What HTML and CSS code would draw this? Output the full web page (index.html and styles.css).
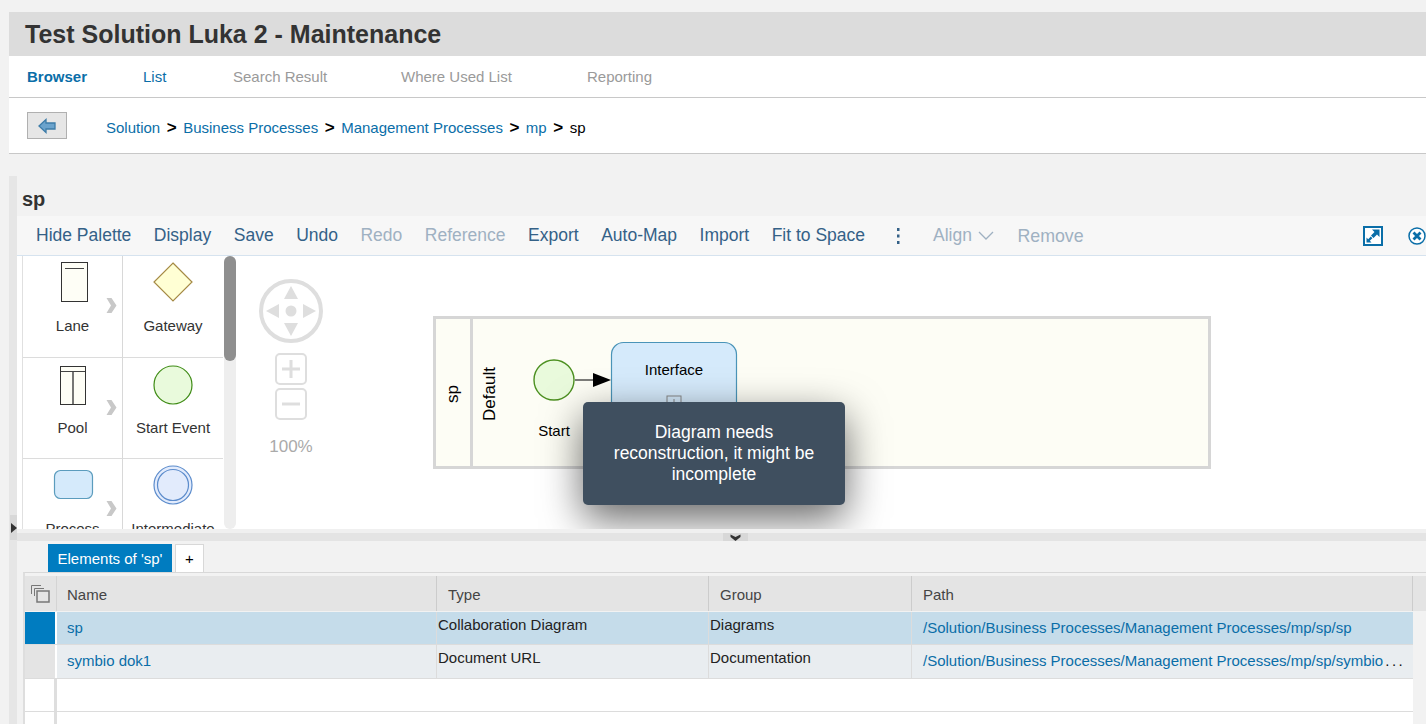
FILE: index.html
```html
<!DOCTYPE html>
<html lang="en">
<head>
<meta charset="UTF-8">
<meta name="viewport" content="width=device-width, initial-scale=1.0">
<title>Test Solution Luka 2 - Maintenance</title>
<link rel="stylesheet" href="styles.css">
</head>
<body>
<div class="page">
    <div class="title-bar"><h1>Test Solution Luka 2 - Maintenance</h1></div>
    <div class="main-tabs">
        <a class="active">Browser</a>
        <a class="enabled">List</a>
        <a>Search Result</a>
        <a>Where Used List</a>
        <a>Reporting</a>
    </div>
    <div class="crumbs">
        <button class="back-btn" type="button">
            <svg width="18" height="16" viewBox="0 0 18 16"><path d="M1 8 8 1.500V5H17V11H8V14.500Z" fill="#6ba3cc" stroke="#3d7ca8" stroke-width="1.300"/></svg>
        </button>
        <div class="crumb-list">
            <a>Solution</a><b>&gt;</b>
            <a>Business Processes</a><b>&gt;</b>
            <a>Management Processes</a><b>&gt;</b>
            <a>mp</a><b>&gt;</b>
            <span>sp</span>
        </div>
    </div>

    <div class="workspace">
        <div class="side-strip"><span class="strip-handle"></span></div>
        <div class="panel">
            <h2>sp</h2>
            <div class="toolbar">
                <span>Hide Palette</span>
                <span>Display</span>
                <span>Save</span>
                <span>Undo</span>
                <span class="off">Redo</span>
                <span class="off">Reference</span>
                <span>Export</span>
                <span>Auto-Map</span>
                <span>Import</span>
                <span>Fit to Space</span>
                <svg class="dots" width="4" height="18" viewBox="0 0 4 18"><path d="M1 1h2.500v3H1zM1 7.500h2.500v3H1zM1 14h2.500v3H1z" fill="#346187"/></svg>
                <span class="off align">Align
                    <svg width="16" height="9" viewBox="0 0 16 9"><path d="M1 1 8 8 15 1" fill="none" stroke="#9fb1c2" stroke-width="1.300"/></svg>
                </span>
                <span class="off remove">Remove</span>
                <div class="toolbar-right">
                    <svg width="20" height="20" viewBox="0 0 20 20"><rect x="1" y="1" width="18" height="18" fill="#fff" stroke="#0a6ea8" stroke-width="2"/><path d="M9 3.500h7.500V11L14 8.500 10.500 12 8 9.500 11.500 6z" fill="#0a6ea8"/><path d="M3.500 16.500V11.500L5.200 13.200 7.800 10.600 9.400 12.200 6.800 14.800 8.500 16.500z" fill="#0a6ea8"/></svg>
                    <svg class="close-icon" width="18" height="18" viewBox="0 0 18 18"><circle cx="9" cy="9" r="8" fill="#fff" stroke="#0a6ea8" stroke-width="1.500"/><path d="M5.500 5.500 12.500 12.500M12.500 5.500 5.500 12.500" stroke="#0a6ea8" stroke-width="2.800"/></svg>
                </div>
            </div>

            <div class="editor">
                <div class="palette">
                    <div class="palette-grid">
                        <div class="cell">
                            <svg width="60" height="50" viewBox="0 0 60 50"><rect x="18.500" y="4.500" width="26" height="39" fill="#fefef6" stroke="#333"/><path d="M22 10.500H41" stroke="#444"/></svg>
                            <span>Lane</span>
                            <svg class="more" width="11" height="17" viewBox="0 0 11 17"><path d="M0.500 1h5l5 7.500-5 7.500h-5l4.500-7.500z" fill="#c8c8c8"/></svg>
                        </div>
                        <div class="cell">
                            <svg width="60" height="50" viewBox="0 0 60 50"><path d="M30 5 49 24 30 43 11 24Z" fill="#ffffd4" stroke="#a58a45" stroke-width="1.200"/></svg>
                            <span>Gateway</span>
                        </div>
                        <div class="cell">
                            <svg width="60" height="50" viewBox="0 0 60 50"><rect x="17.500" y="6.500" width="25" height="38" fill="#fefef6" stroke="#333"/><path d="M18 11.500H42" stroke="#444"/><path d="M30 12V44" stroke="#555" stroke-width="1.600"/></svg>
                            <span>Pool</span>
                            <svg class="more" width="11" height="17" viewBox="0 0 11 17"><path d="M0.500 1h5l5 7.500-5 7.500h-5l4.500-7.500z" fill="#c8c8c8"/></svg>
                        </div>
                        <div class="cell">
                            <svg width="60" height="50" viewBox="0 0 60 50"><circle cx="30" cy="25" r="19" fill="#e9fadc" stroke="#3f8c16" stroke-width="1.200"/></svg>
                            <span>Start Event</span>
                        </div>
                        <div class="cell">
                            <svg width="60" height="50" viewBox="0 0 60 50"><rect x="11.500" y="9.500" width="38" height="28" rx="6" fill="#d5eafb" stroke="#5b9cbd" stroke-width="1.200"/></svg>
                            <span>Process</span>
                            <svg class="more" width="11" height="17" viewBox="0 0 11 17"><path d="M0.500 1h5l5 7.500-5 7.500h-5l4.500-7.500z" fill="#c8c8c8"/></svg>
                        </div>
                        <div class="cell">
                            <svg width="60" height="50" viewBox="0 0 60 50"><circle cx="30" cy="24" r="19" fill="#e2ebfc" stroke="#5c8ccc" stroke-width="1.200"/><circle cx="30" cy="24" r="15.500" fill="#e2ebfc" stroke="#5c8ccc" stroke-width="1.200"/></svg>
                            <span>Intermediate</span>
                        </div>
                    </div>
                    <div class="scrollbar"><span class="thumb"></span></div>
                </div>

                <div class="canvas">
                    <svg class="diagram" width="1190" height="273" viewBox="236 256 1190 273">
                        <!-- navigator -->
                        <circle cx="291" cy="311" r="30" fill="none" stroke="#dedede" stroke-width="4"/>
                        <path d="M291 286 298 299H284ZM291 336 298 323H284ZM266 311 279 304V318ZM316 311 303 304V318Z" fill="#dedede"/>
                        <circle cx="291" cy="311" r="5.500" fill="#dedede"/>
                        <rect x="276" y="354" width="30" height="30" rx="4" fill="#fff" stroke="#dedede" stroke-width="2"/>
                        <path d="M282 369H300M291 360V378" stroke="#dedede" stroke-width="3"/>
                        <rect x="276" y="389" width="30" height="30" rx="4" fill="#fff" stroke="#dedede" stroke-width="2"/>
                        <path d="M282 404H300" stroke="#dedede" stroke-width="3"/>
                        <text class="zoom-label" x="291" y="452" text-anchor="middle">100%</text>

                        <!-- pool -->
                        <rect x="434.500" y="317.500" width="775" height="150" fill="#fdfdf5" stroke="#d6d6d6" stroke-width="3"/>
                        <path d="M471.500 318V467" stroke="#d6d6d6" stroke-width="3"/>
                        <text class="lane-label" transform="translate(458 394) rotate(-90)" text-anchor="middle">sp</text>
                        <text class="lane-label" transform="translate(495 394) rotate(-90)" text-anchor="middle">Default</text>

                        <circle cx="554" cy="380" r="20" fill="#e9fadc" stroke="#4c9020" stroke-width="1.400"/>
                        <text class="node-label" x="554" y="436" text-anchor="middle">Start</text>
                        <path d="M575 380H594" stroke="#444" stroke-width="1.400"/>
                        <path d="M593 373 611 380 593 387Z" fill="#000"/>

                        <rect x="611.500" y="342.500" width="125" height="90" rx="12" fill="#d5eafb" stroke="#4a94b8" stroke-width="1.200"/>
                        <text class="node-label" x="674" y="375" text-anchor="middle">Interface</text>
                        <rect x="667" y="396" width="14" height="14" fill="none" stroke="#888"/>
                        <path d="M670 403H678M674 399V407" stroke="#888"/>
                    </svg>
                    <div class="toast">Diagram needs reconstruction, it might be incomplete</div>
                </div>
            </div>

            <div class="splitter">
                <span class="split-handle">
                    <svg width="11" height="7" viewBox="0 0 11 7"><path d="M0.500 0.500 5.500 3 10.500 0.500V3L5.500 7 0.500 3Z" fill="#333"/></svg>
                </span>
            </div>

            <div class="sub-tabs">
                <span class="sub-tab">Elements of 'sp'</span>
                <span class="sub-add">+</span>
            </div>

            <div class="table-wrap">
                <div class="row head">
                    <div class="sel">
                        <svg width="19" height="18" viewBox="0 0 19 18"><path d="M0.500 9V0.500H10M3.500 11V3.500H13" fill="none" stroke="#777"/><rect x="6" y="6" width="12" height="11" fill="none" stroke="#777" stroke-width="1.500"/></svg>
                    </div>
                    <div class="gap"></div>
                    <div class="c name">Name</div>
                    <div class="c">Type</div>
                    <div class="c">Group</div>
                    <div class="c path">Path</div>
                    <div class="filler"></div>
                </div>
                <div class="row item selected">
                    <div class="sel"></div>
                    <div class="gap"></div>
                    <div class="c link">sp</div>
                    <div class="c plain">Collaboration Diagram</div>
                    <div class="c plain">Diagrams</div>
                    <div class="c link">/Solution/Business Processes/Management Processes/mp/sp/sp</div>
                </div>
                <div class="row item">
                    <div class="sel"></div>
                    <div class="gap"></div>
                    <div class="c link">symbio dok1</div>
                    <div class="c plain">Document URL</div>
                    <div class="c plain">Documentation</div>
                    <div class="c link">/Solution/Business Processes/Management Processes/mp/sp/symbio<span class="clip-dots">...</span></div>
                </div>
                <div class="row blank"><div class="sel"></div><div class="gap"></div></div>
                <div class="row blank"><div class="sel"></div><div class="gap"></div></div>
            </div>
        </div>
    </div>
</div>
</body>
</html>
```

FILE: styles.css
```css
html, body {
    margin: 0;
    padding: 0;
    height: 724px;
    overflow: hidden;
}
body {
    font-family: "Liberation Sans", Arial, sans-serif;
    background-color: #f2f2f2;
    color: #333;
}
.page {
    padding: 12px 0 0 9px;
}
.title-bar {
    height: 44px;
    background-color: #dcdcdc;
    display: flex;
    align-items: center;
    padding-left: 16px;
}
.title-bar h1 {
    margin: 0;
    font-size: 25px;
    font-weight: bold;
    color: #333;
}
.main-tabs {
    height: 41px;
    background-color: #fff;
    border-bottom: 1px solid #c8c8c8;
    display: grid;
    grid-template-columns: 116px 90px 168px 186px auto;
    align-items: center;
    padding-left: 18px;
    font-size: 15px;
    color: #9a9a9a;
}
.main-tabs .active {
    color: #0a6ea8;
    font-weight: bold;
}
.main-tabs .enabled {
    color: #0a6ea8;
}
.crumbs {
    height: 55px;
    background-color: #fff;
    border-bottom: 1px solid #c8c8c8;
    display: flex;
    align-items: center;
    padding-left: 18px;
}
.back-btn {
    width: 40px;
    height: 27px;
    padding: 0;
    background-color: #e6e6e6;
    border: 1px solid #b0b0b0;
    display: flex;
    align-items: center;
    justify-content: center;
}
.crumb-list {
    margin-left: 39px;
    margin-top: 4px;
    display: flex;
    align-items: center;
    gap: 6.5px;
    font-size: 15px;
    color: #000;
}
.crumb-list a {
    color: #0a6ea8;
}
.crumb-list b {
    font-size: 17px;
}
.workspace {
    margin-top: 22px;
    display: flex;
}
.side-strip {
    width: 8px;
    height: 548px;
    background-color: #e6e6e6;
    position: relative;
    flex: none;
}
.strip-handle {
    position: absolute;
    left: 1px;
    top: 339px;
    width: 7px;
    height: 25px;
    background-color: #d8d8d8;
}
.strip-handle::after {
    content: "";
    position: absolute;
    left: 1px;
    top: 8px;
    border-left: 6px solid #333;
    border-top: 5px solid transparent;
    border-bottom: 5px solid transparent;
}
.panel {
    flex: 1;
    min-width: 0;
}
.panel h2 {
    margin: 0;
    height: 40px;
    padding-left: 5px;
    line-height: 46px;
    font-size: 20px;
    font-weight: bold;
    color: #333;
}
.toolbar {
    height: 39px;
    background-color: #f7f7f7;
    border-bottom: 1px solid #d6e3ef;
    display: flex;
    align-items: center;
    gap: 22.5px;
    padding-left: 19px;
    font-size: 17.5px;
    color: #346187;
    white-space: nowrap;
}
.toolbar .off {
    color: #9fb1c2;
}
.toolbar .dots {
    margin-left: 8px;
    margin-right: 11px;
}
.toolbar .align {
    display: flex;
    align-items: center;
    gap: 6px;
}
.toolbar .remove {
    margin-left: 1px;
    font-size: 17.8px;
    padding-top: 2px;
}
.toolbar-right {
    margin-left: auto;
    display: flex;
    align-items: center;
    gap: 25px;
}
.close-icon {
    flex: none;
}
.editor {
    height: 273px;
    display: flex;
    background-color: #fff;
    overflow: hidden;
}
.palette {
    width: 214px;
    margin-left: 5px;
    display: flex;
    flex: none;
}
.palette-grid {
    width: 202px;
    display: grid;
    grid-template-columns: 100px 100px;
    grid-auto-rows: 101.5px;
    border-left: 1px solid #e0e0e0;
    box-sizing: border-box;
    flex: none;
}
.cell {
    position: relative;
    display: flex;
    flex-direction: column;
    align-items: center;
    padding-top: 2px;
    box-sizing: border-box;
    border-bottom: 1px solid #dcdcdc;
    font-size: 15px;
    color: #333;
}
.cell:nth-child(odd) {
    border-right: 1px solid #d8d8d8;
}
.cell span {
    margin-top: 9px;
}
.cell .more {
    position: absolute;
    right: 5px;
    top: 41px;
}
.scrollbar {
    width: 12px;
    background-color: #eee;
    border-radius: 6px;
    position: relative;
    flex: none;
}
.scrollbar .thumb {
    position: absolute;
    left: 0;
    top: 0;
    width: 12px;
    height: 105px;
    border-radius: 6px;
    background-color: #8f8f8f;
}
.canvas {
    flex: 1;
    min-width: 0;
    position: relative;
    overflow: hidden;
}
.diagram {
    position: absolute;
    left: 0;
    top: 0;
}
.diagram text {
    font-family: "Liberation Sans", Arial, sans-serif;
}
.zoom-label {
    font-size: 17px;
    fill: #aaa;
}
.lane-label {
    font-size: 17px;
    fill: #000;
}
.node-label {
    font-size: 15px;
    fill: #000;
}
.toast {
    position: absolute;
    left: 347px;
    top: 146px;
    width: 262px;
    height: 103px;
    box-sizing: border-box;
    padding: 20px 24px;
    background-color: #3f4f5f;
    border-radius: 5px;
    box-shadow: 0 14px 40px rgba(0,0,0,0.6);
    color: #fff;
    font-size: 17.5px;
    line-height: 21px;
    text-align: center;
}
.splitter {
    height: 8px;
    margin-top: 4px;
    background-color: #e4e4e4;
    display: flex;
    justify-content: center;
    padding-right: 8px;
    position: relative;
    box-shadow: 0 -4px 0 #f0f0f0;
}
.split-handle {
    width: 25px;
    height: 8px;
    background-color: #d8d8d8;
    display: flex;
    align-items: center;
    justify-content: center;
    position: relative;
    left: 18px;
}
.sub-tabs {
    display: flex;
    gap: 3px;
    height: 28px;
    margin-top: 3px;
    padding-left: 31px;
    font-size: 15px;
}
.sub-tab {
    width: 124px;
    background-color: #007cc0;
    color: #fff;
    display: flex;
    align-items: center;
    justify-content: center;
}
.sub-add {
    width: 29px;
    box-sizing: border-box;
    background-color: #fff;
    border: 1px solid #d8d8d8;
    border-bottom: none;
    color: #000;
    display: flex;
    align-items: center;
    justify-content: center;
}
.table-wrap {
    margin-left: 6px;
    border-top: 1px solid #d8d8d8;
    border-left: 2px solid #dedede;
    padding-top: 3px;
    font-size: 15px;
    height: 148px;
    overflow: hidden;
}
.row {
    display: grid;
    grid-template-columns: 30px 2px 380px 272px 203px 501px 1fr;
    box-sizing: border-box;
}
.head {
    height: 35px;
    background-color: #e4e4e4;
    color: #444;
    align-items: stretch;
}
.head .sel {
    display: flex;
    align-items: center;
    justify-content: center;
    background-color: #e4e4e4;
}
.head .gap {
    background-color: #e4e4e4;
    border-right: 1px solid #d4d4d4;
    box-sizing: border-box;
}
.head .c {
    display: flex;
    align-items: center;
    padding-left: 11px;
    padding-top: 1px;
    border-right: 1px solid #ccc;
    box-sizing: border-box;
}
.head .name {
    padding-left: 10px;
}
.item {
    height: 34px;
    background-color: #e9edf0;
    border-bottom: 1px solid #dcdcdc;
    margin-right: 13px;
    grid-template-columns: 30px 2px 380px 272px 203px 501px;
}
.item.selected {
    background-color: #c5dcea;
    height: 33px;
    margin-top: 1px;
}
.item .sel {
    background-color: #e4e4e4;
}
.item.selected .sel {
    background-color: #007cc0;
}
.item .gap {
    background-color: #fff;
}
.item .c {
    border-right: 1px solid #dcdcdc;
    box-sizing: border-box;
    white-space: nowrap;
}
.link {
    color: #0a6ea8;
    padding-left: 10px;
    line-height: 31px;
}
.item .c:last-child {
    padding-left: 11px;
    border-right: none;
}
.plain {
    color: #222;
    padding-left: 1px;
    line-height: 25px;
}
.clip-dots {
    color: #111;
    margin-left: 2px;
    letter-spacing: 2.5px;
}
.blank {
    height: 33px;
    background-color: #fff;
    border-bottom: 1px solid #dcdcdc;
    margin-right: 13px;
}
.blank .sel {
    width: 29px;
}
.blank .gap {
    width: 3px;
    margin-left: -1px;
    background-color: #dedede;
}
```
